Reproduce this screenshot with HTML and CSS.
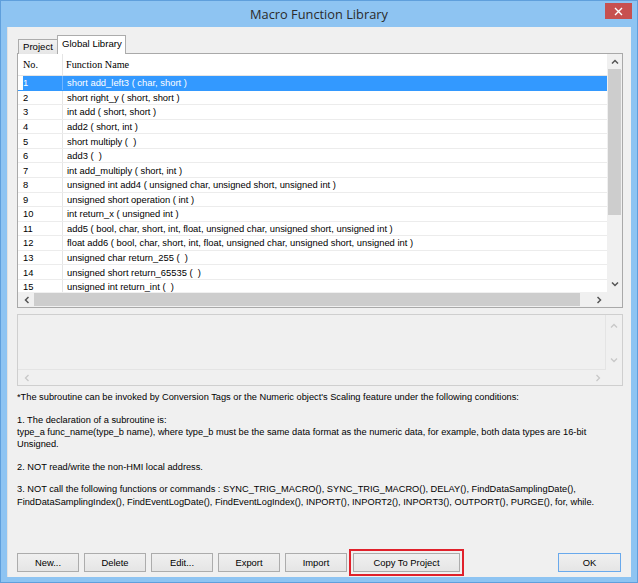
FILE: index.html
```html
<!DOCTYPE html>
<html lang="en">
<head>
    <meta charset="UTF-8">
    <title>Macro Function Library</title>
    <link rel="stylesheet" href="styles.css">
</head>
<body>
<div class="window">
    <!-- Title Bar -->
    <div class="titlebar">
        <span></span>
        <div class="title">Macro Function Library</div>
        <div class="close">
            <svg width="9" height="9" viewBox="0 0 9 9"><path d="M1 1 L8 8 M8 1 L1 8" stroke="#fff" stroke-width="1.4"/></svg>
        </div>
    </div>

    <div class="client">
        <!-- Tabs -->
        <div class="tabs">
            <div class="tab">Project</div>
            <div class="tab active">Global Library</div>
        </div>

        <!-- Function List -->
        <div class="listbox">
            <div class="list-main">
                <div class="list-head">
                    <div class="col-no">No.</div>
                    <div class="col-name">Function Name</div>
                </div>
                <div class="list-rows">
                    <div class="row selected"><div class="col-no">1</div><div class="col-name">short add_left3 ( char, short )</div></div>
                    <div class="row"><div class="col-no">2</div><div class="col-name">short right_y ( short, short )</div></div>
                    <div class="row"><div class="col-no">3</div><div class="col-name">int add ( short, short )</div></div>
                    <div class="row"><div class="col-no">4</div><div class="col-name">add2 ( short, int )</div></div>
                    <div class="row"><div class="col-no">5</div><div class="col-name">short multiply ( &nbsp;)</div></div>
                    <div class="row"><div class="col-no">6</div><div class="col-name">add3 ( &nbsp;)</div></div>
                    <div class="row"><div class="col-no">7</div><div class="col-name">int add_multiply ( short, int )</div></div>
                    <div class="row"><div class="col-no">8</div><div class="col-name">unsigned int add4 ( unsigned char, unsigned short, unsigned int )</div></div>
                    <div class="row"><div class="col-no">9</div><div class="col-name">unsigned short operation ( int )</div></div>
                    <div class="row"><div class="col-no">10</div><div class="col-name">int return_x ( unsigned int )</div></div>
                    <div class="row"><div class="col-no">11</div><div class="col-name">add5 ( bool, char, short, int, float, unsigned char, unsigned short, unsigned int )</div></div>
                    <div class="row"><div class="col-no">12</div><div class="col-name">float add6 ( bool, char, short, int, float, unsigned char, unsigned short, unsigned int )</div></div>
                    <div class="row"><div class="col-no">13</div><div class="col-name">unsigned char return_255 ( &nbsp;)</div></div>
                    <div class="row"><div class="col-no">14</div><div class="col-name">unsigned short return_65535 ( &nbsp;)</div></div>
                    <div class="row"><div class="col-no">15</div><div class="col-name">unsigned int return_int ( &nbsp;)</div></div>
                </div>
            </div>
            <!-- vertical scrollbar -->
            <div class="vscroll">
                <div class="arrow"><svg width="8" height="5" viewBox="0 0 8 5"><path d="M1 4.5 L4 1.5 L7 4.5" fill="none" stroke="#555" stroke-width="1.5"/></svg></div>
                <div class="vthumb"></div>
                <div class="vtrack"></div>
                <div class="arrow"><svg width="8" height="5" viewBox="0 0 8 5"><path d="M1 0.5 L4 3.5 L7 0.5" fill="none" stroke="#555" stroke-width="1.5"/></svg></div>
            </div>
            <!-- horizontal scrollbar -->
            <div class="hscroll">
                <div class="arrow"><svg width="5" height="8" viewBox="0 0 5 8"><path d="M4.5 1 L1.5 4 L4.5 7" fill="none" stroke="#555" stroke-width="1.5"/></svg></div>
                <div class="hthumb"></div>
                <div class="htrack"></div>
                <div class="arrow"><svg width="5" height="8" viewBox="0 0 5 8"><path d="M0.5 1 L3.5 4 L0.5 7" fill="none" stroke="#555" stroke-width="1.5"/></svg></div>
            </div>
            <div class="corner"></div>
        </div>

        <!-- Description Box (disabled) -->
        <div class="descbox">
            <div class="desc-main"></div>
            <div class="vscroll off">
                <div class="arrow"><svg width="8" height="5" viewBox="0 0 8 5"><path d="M1 4.5 L4 1.5 L7 4.5" fill="none" stroke="#c8c8c8" stroke-width="1.3"/></svg></div>
                <div class="vtrack"></div>
                <div class="arrow"><svg width="8" height="5" viewBox="0 0 8 5"><path d="M1 0.5 L4 3.5 L7 0.5" fill="none" stroke="#c8c8c8" stroke-width="1.3"/></svg></div>
            </div>
            <div class="hscroll off">
                <div class="arrow"><svg width="5" height="8" viewBox="0 0 5 8"><path d="M4.5 1 L1.5 4 L4.5 7" fill="none" stroke="#c8c8c8" stroke-width="1.3"/></svg></div>
                <div class="htrack"></div>
                <div class="arrow"><svg width="5" height="8" viewBox="0 0 5 8"><path d="M0.5 1 L3.5 4 L0.5 7" fill="none" stroke="#c8c8c8" stroke-width="1.3"/></svg></div>
            </div>
            <div class="corner"></div>
        </div>

        <!-- Notes -->
        <div class="notes">
            <p>*The subroutine can be invoked by Conversion Tags or the Numeric object's Scaling feature under the following conditions:</p>
            <p>1. The declaration of a subroutine is:<br>type_a func_name(type_b name), where type_b must be the same data format as the numeric data, for example, both data types are 16-bit Unsigned.</p>
            <p>2. NOT read/write the non-HMI local address.</p>
            <p>3. NOT call the following functions or commands : SYNC_TRIG_MACRO(), SYNC_TRIG_MACRO(), DELAY(), FindDataSamplingDate(), FindDataSamplingIndex(), FindEventLogDate(), FindEventLogIndex(), INPORT(), INPORT2(), INPORT3(), OUTPORT(), PURGE(), for, while.</p>
        </div>

        <!-- Buttons -->
        <div class="buttons">
            <button class="btn">New...</button>
            <button class="btn">Delete</button>
            <button class="btn">Edit...</button>
            <button class="btn">Export</button>
            <button class="btn">Import</button>
            <button class="btn wide marked">Copy To Project</button>
            <button class="btn default">OK</button>
        </div>
    </div>
</div>
</body>
</html>
```

FILE: styles.css
```css
/* Basic Reset */
* {
    margin: 0;
    padding: 0;
    box-sizing: border-box;
}

body {
    width: 638px;
    height: 583px;
    overflow: hidden;
    font-family: 'Liberation Sans', Arial, sans-serif;
    font-size: 9.4px;
    color: #000;
    background-color: #8ec4f2;
}

/* Window Frame */
.window {
    height: 583px;
    background-color: #8ec4f2;
    box-shadow: inset 0 0 0 1px #5f9fdc;
    display: flex;
    flex-direction: column;
}

.titlebar {
    height: 27px;
    display: grid;
    grid-template-columns: 1fr auto 1fr;
    align-items: center;
}

.title {
    font-family: 'Open Sans', 'Liberation Sans', sans-serif;
    font-size: 12.8px;
    color: #2b2b2b;
    padding-top: 1px;
}

.close {
    justify-self: end;
    align-self: start;
    margin-top: 3px;
    margin-right: 6px;
    width: 27px;
    height: 16px;
    background-color: #c75050;
    display: flex;
    align-items: center;
    justify-content: center;
}

/* Client Area */
.client {
    margin: 0 7px;
    height: 550px;
    background-color: #f0f0f0;
    border-left: 1px solid #e2e2e2;
    padding: 9px 8px 0 9px;
    display: flex;
    flex-direction: column;
}

/* Tabs */
.tabs {
    height: 18px;
    display: flex;
    align-items: flex-end;
    padding-left: 1px;
    margin-bottom: -1px;
    position: relative;
    z-index: 1;
    font-size: 9.6px;
}

.tab {
    width: 40px;
    height: 15px;
    border: 1px solid #acacac;
    border-bottom: none;
    background: linear-gradient(#f2f2f2, #e6e6e6);
    padding-left: 4px;
    line-height: 13px;
}

.tab.active {
    width: 69px;
    height: 19px;
    margin-left: -1px;
    background: #fff;
    padding-left: 4px;
    line-height: 16px;
}

/* List box */
.listbox {
    height: 255px;
    border: 1px solid #a9a9a9;
    background-color: #fff;
    display: grid;
    grid-template-columns: 1fr 15px;
    grid-template-rows: 1fr 15px;
}

.list-main {
    overflow: hidden;
}

.list-head {
    height: 22px;
    display: flex;
    align-items: stretch;
    border-bottom: 1px solid #e5e5e5;
    font-family: 'Liberation Serif', serif;
    font-size: 10.2px;
}

.col-no {
    width: 44px;
    padding-left: 5px;
    display: flex;
    align-items: center;
}

.col-name {
    flex: 1;
    padding-left: 4px;
    border-left: 1px solid #e5e5e5;
    white-space: nowrap;
    display: flex;
    align-items: center;
}

.list-head .col-name {
    padding-left: 3px;
}

.row {
    height: 14.57px;
    display: flex;
    border-bottom: 1px solid #ececec;
}

.row.selected {
    background: linear-gradient(to right, #fff 5px, #3399ff 5px);
    color: #fff;
    border-bottom-color: #3399ff;
}

.row.selected .col-name {
    border-left-color: #70b5ff;
}

/* Scrollbars */
.vscroll {
    background-color: #f0f0f0;
    display: flex;
    flex-direction: column;
    padding: 0 1px;
}

.vscroll .arrow {
    height: 15px;
    display: flex;
    align-items: center;
    justify-content: center;
}

.vthumb {
    height: 146px;
    background-color: #cdcdcd;
}

.vtrack, .htrack {
    flex: 1;
}

.hscroll {
    background-color: #f0f0f0;
    display: flex;
    padding: 1px 0;
}

.hscroll .arrow {
    width: 16px;
    display: flex;
    align-items: center;
    justify-content: center;
}

.hthumb {
    width: 546px;
    background-color: #cdcdcd;
}

.corner {
    background-color: #f0f0f0;
}

/* Description box */
.descbox {
    margin-top: 6px;
    height: 72px;
    border: 1px solid #cfcfcf;
    background-color: #f0f0f0;
    display: grid;
    grid-template-columns: 1fr 16px;
    grid-template-rows: 1fr 15px;
}

.desc-main {
    border-right: 1px solid #e4e4e4;
    border-bottom: 1px solid #e4e4e4;
}

.vscroll.off .arrow {
    height: 20px;
}

/* Notes */
.notes {
    margin-top: 5px;
    line-height: 12.3px;
    font-size: 9.25px;
}

.notes p {
    margin-bottom: 10.3px;
}

/* Buttons */
.buttons {
    margin-top: auto;
    margin-bottom: 5px;
    display: flex;
    gap: 5px;
    padding-right: 2px;
}

.btn {
    width: 62px;
    height: 19px;
    border: 1px solid #acacac;
    background: linear-gradient(#f0f0f0, #e5e5e5);
    font-family: 'Liberation Sans', Arial, sans-serif;
    font-size: 9.4px;
    color: #000;
}

.btn.wide {
    width: 107px;
    margin-left: 1px;
}

.btn.marked {
    outline: 2px solid #e0212b;
    outline-offset: 2px;
}

.btn.default {
    width: 63px;
    margin-left: auto;
    border-color: #69a9ec;
}
```
